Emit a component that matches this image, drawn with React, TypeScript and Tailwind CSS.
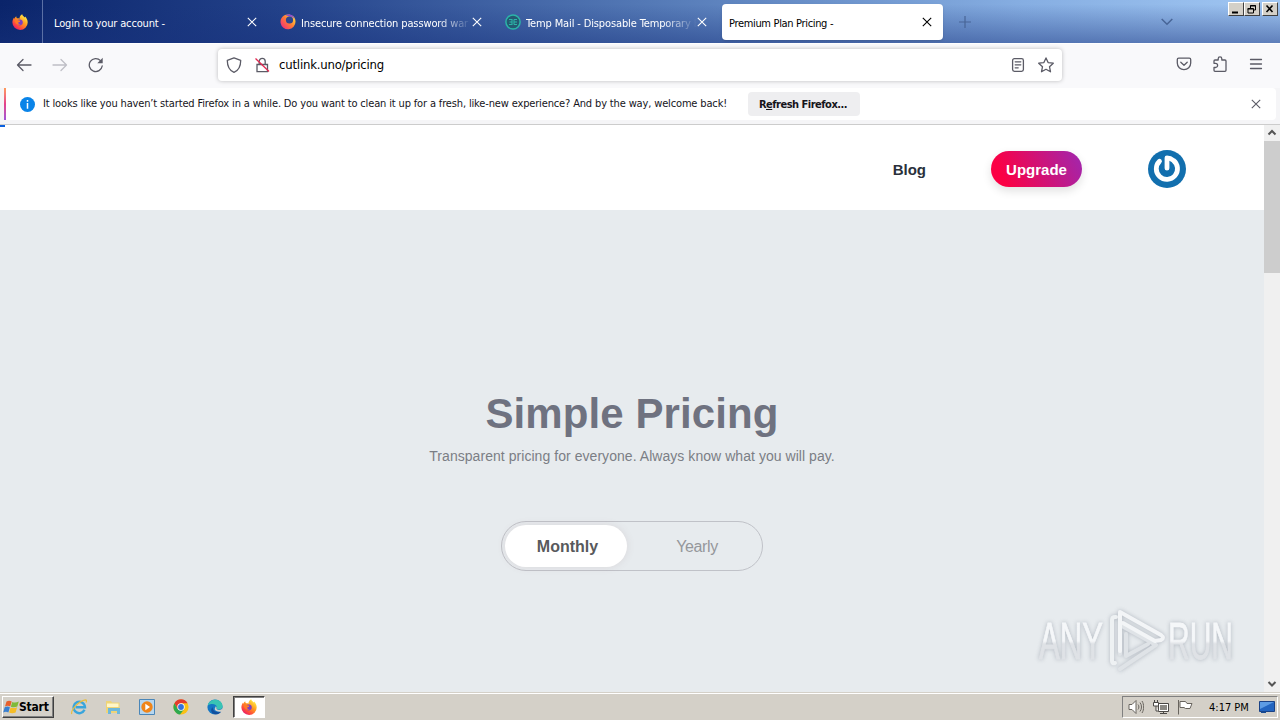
import type { ReactNode } from 'react';

type Tab = {
  title: string;
  icon?: ReactNode;
  active?: boolean;
};

function FirefoxLogo({ className, id }: { className: string; id: string }) {
  return (
    <svg viewBox="0 0 16 16" className={className}>
      <defs>
        <linearGradient id={id} x1="0.85" y1="0.1" x2="0.2" y2="0.95">
          <stop offset="0" stopColor="#fff04a" />
          <stop offset="0.4" stopColor="#ff9a1f" />
          <stop offset="0.75" stopColor="#ff4a3c" />
          <stop offset="1" stopColor="#e4186f" />
        </linearGradient>
      </defs>
      <path
        d="M10.2.3c.3 1.4 1.4 2 2.4 3.1.4-.1.5-.5.5-.8 1.6 1.7 2.6 3.7 2.6 5.9a7.6 7.4 0 0 1-15.3.1c0-2 .7-3.8 1.7-5 0 .5.2.9.4 1.1.3-1 .9-1.8 1.8-2.4-.1.8.2 1.6.7 1.9.8-.1 1.8 0 2.5.5-.2-1.6.9-3.3 2.7-4.4z"
        fill={`url(#${id})`}
      />
      <path d="M5.4 6.5c.8-1.2 3.5-1.5 4.8.1 1.3 1.7.5 4.6-2 4.8-2 .2-3.4-1.4-3-3l1.8-.4c.8-.2 1.1-.6 1.2-1.1z" fill="#7a3fc4" />
      <path d="M2.5 6.2c1-.7 2.3-.6 3.2.1l2.6.4c-.2.9-1.2 1.2-2 1.5-.3 1.4 1 2.2 2.3 1.8-1.6 1.8-5.4.7-6.1-3.8z" fill="#ff7a26" />
    </svg>
  );
}

// Simplified logo used by the support site: a ring with a violet top and a dark centre
function SupportLogo() {
  return (
    <svg viewBox="0 0 16 16" className="h-4 w-4 shrink-0">
      <defs>
        <linearGradient id="supportFox" x1="0.9" y1="0.2" x2="0.1" y2="0.9">
          <stop offset="0" stopColor="#ffd03a" />
          <stop offset="0.45" stopColor="#ff7a35" />
          <stop offset="1" stopColor="#f0307a" />
        </linearGradient>
      </defs>
      <path d="M4 1.5C7.5-.5 15.5.3 15.5 7.6A7.500 7.500 0 0 1 .6 9C.2 5.500 1.300 3.500 4 1.500z" fill="url(#supportFox)" />
      <path d="M5.500 1.300c4-2 8.500.2 9.200 4.200-1.200-2.200-3-3.200-5.200-3z" fill="#8a45e0" />
      <circle cx="9.500" cy="6" r="3.600" fill="#2b468f" />
    </svg>
  );
}

function Cross({ className }: { className: string }) {
  return (
    <svg viewBox="0 0 10 10" className={className} fill="none" stroke="currentColor" strokeWidth="1.1">
      <path d="M.8.8l8.4 8.4M9.2.8L.8 9.2" />
    </svg>
  );
}

const tabs: Tab[] = [
  { title: 'Login to your account -' },
  { title: 'Insecure connection password war', icon: <SupportLogo /> },
  {
    title: 'Temp Mail - Disposable Temporary E',
    icon: (
      <svg viewBox="0 0 16 16" className="h-4 w-4 shrink-0" fill="none" stroke="#2bb5a8" strokeWidth="1.5">
        <circle cx="8" cy="8" r="7.1" fill="#245a72" />
        <path d="M4 5.5h3v5H4M4.5 8H7M9 5.5h3M9 8h3M9 10.5h3M9 5.5v5" strokeWidth="1.1" />
      </svg>
    ),
  },
  { title: 'Premium Plan Pricing -', active: true },
];

function TabStrip() {
  return (
    <header className="flex h-[43px] bg-[linear-gradient(to_bottom,rgba(30,60,140,0)_10%,rgba(24,50,125,0.48)),linear-gradient(to_right,#0a246a,#23428a_22%,#5378b5_50%,#86aee2_80%,#a0c6f2)]">
      <div className="flex w-[43px] items-center justify-center border-r border-[#5b70a5] pr-0.5">
        <FirefoxLogo id="menuFox" className="h-4 w-4" />
      </div>
      <div className="flex gap-1 py-1 pl-1">
        {tabs.map((tab) => (
          <div
            key={tab.title}
            className={`flex h-9 w-[221px] items-center rounded pr-[11px] ${
              tab.active ? 'bg-white pl-[7px] text-black shadow-sm' : tab.icon ? 'pl-2 text-white' : 'pl-[7px] text-white'
            }`}
          >
            {tab.icon}
            <span
              className={`flex-1 pt-1 text-[11px] whitespace-nowrap ${
                tab.icon
                  ? 'ml-[5px] w-0 tracking-[-0.13px] [mask-image:linear-gradient(to_right,black_80%,transparent_100%)]'
                  : tab.active
                    ? 'tracking-[-0.33px]'
                    : 'tracking-[-0.15px]'
              }`}
            >
              {tab.title}
            </span>
            <Cross className="mb-px h-[10px] w-[10px] shrink-0" />
          </div>
        ))}
      </div>
      <svg viewBox="0 0 12 12" className="mt-4 ml-4 h-3 w-3 text-[#486597]" stroke="currentColor" strokeWidth="1.2">
        <path d="M6 0v12M0 6h12" />
      </svg>
      <svg viewBox="0 0 12 8" className="mt-[18px] ml-[190px] h-2 w-3" fill="none" stroke="#486597" strokeWidth="1.5">
        <path d="M.7 1L6 6.3 11.3 1" />
      </svg>
      <div className="mt-0.5 mr-0.5 ml-auto flex h-[14px]">
        <WindowButton>
          <path d="M3 9.5h6" strokeWidth="2" />
        </WindowButton>
        <WindowButton>
          <path d="M5.5 5V2.5h5V7h-2M5 3h6M3 5.5h5.5V10H3zM2.5 6h6" />
        </WindowButton>
        <div className="w-0.5" />
        <WindowButton>
          <path d="M3.500 2.500l6 6.500M9.500 2.500l-6 6.500" strokeWidth="1.6" />
        </WindowButton>
      </div>
    </header>
  );
}

function WindowButton({ children }: { children: ReactNode }) {
  return (
    <div className="h-[14px] w-4 border border-t-white border-r-[#404040] border-b-[#404040] border-l-white bg-[#d4d0c8]">
      <svg viewBox="0 0 14 12" className="h-3 w-[14px]" fill="none" stroke="#000" strokeWidth="1">
        {children}
      </svg>
    </div>
  );
}

function Toolbar() {
  return (
    <div className="flex h-[45px] items-center border-t border-white bg-[#f9f9fb] pb-1 text-[#5b5b66]">
      <svg viewBox="0 0 16 16" className="mt-px ml-4 h-4 w-4" fill="none" stroke="currentColor" strokeWidth="1.3" strokeLinecap="round" strokeLinejoin="round">
        <path d="M15 8H1.500M7 2.500L1.500 8 7 13.500" />
      </svg>
      <svg viewBox="0 0 16 16" className="mt-px ml-5 h-4 w-4 text-[#bfbfc6]" fill="none" stroke="currentColor" strokeWidth="1.3" strokeLinecap="round" strokeLinejoin="round">
        <path d="M1 8h13.500M9 2.500L14.500 8 9 13.500" />
      </svg>
      <svg viewBox="0 0 16 16" className="mt-px ml-5 h-4 w-4" fill="none" stroke="currentColor" strokeWidth="1.3" strokeLinecap="round">
        <path d="M14.200 9A6.500 6.500 0 1 1 12.500 3.600" />
        <path d="M14.700.8v5.400H9.300z" fill="currentColor" stroke="none" />
      </svg>
      <div className="mt-px ml-[114px] flex h-8 w-[844px] items-center rounded bg-white shadow-[0_0_4px_rgba(0,0,0,0.25)]">
        <svg viewBox="0 0 16 16" className="ml-2 h-4 w-4" fill="none" stroke="currentColor" strokeWidth="1.3" strokeLinejoin="round">
          <path d="M8 .9l6.700 2.500c0 5.600-1.600 9.700-6.700 11.900C2.900 13.100 1.300 9 1.300 3.400z" />
        </svg>
        <svg viewBox="0 0 16 16" className="ml-3 h-4 w-4" fill="none" stroke="currentColor" strokeWidth="1.3">
          <path d="M3 7.500h10.500v7.200H3zM5.200 7.500V4.300a3 3 0 0 1 6 0v3.200" />
          <path d="M1.500 1.500l13.500 13" stroke="#e22850" />
        </svg>
        <span className="ml-[9px] pt-px text-[13px] tracking-[-0.2px] text-black">cutlink.uno/pricing</span>
        <svg viewBox="0 0 16 16" className="ml-auto h-4 w-4" fill="none" stroke="currentColor" strokeWidth="1.3" strokeLinecap="round">
          <rect x="2.6" y="1.6" width="10.8" height="12.8" rx="1.8" />
          <path d="M5.200 4.800h5.600M5.200 7.800h5.600M5.200 10.800h3" />
        </svg>
        <svg viewBox="0 0 16 16" className="mr-2 ml-3 h-4 w-4" fill="none" stroke="currentColor" strokeWidth="1.3" strokeLinejoin="round">
          <path d="M8 .9l2.100 4.700 5.200.6-3.800 3.500 1 5.100L8 12.300l-4.500 2.500 1-5.100L.7 6.200l5.200-.6z" />
        </svg>
      </div>
      <svg viewBox="0 0 16 16" className="mr-5 ml-auto h-4 w-4" fill="none" stroke="currentColor" strokeWidth="1.3" strokeLinecap="round" strokeLinejoin="round">
        <path d="M2.700 2.200h10.600c.8 0 1.400.6 1.400 1.400V7A6.700 6.700 0 0 1 1.300 7V3.600c0-.8.600-1.400 1.400-1.400z" />
        <path d="M4.800 6.200L8 9.200l3.200-3" />
      </svg>
      <svg viewBox="0 0 16 16" className="mr-5 h-4 w-4" fill="none" stroke="currentColor" strokeWidth="1.3" strokeLinejoin="round">
        <path d="M2 7.300V5c0-.6.400-1 1-1h3.200V2.700a1.800 1.800 0 0 1 3.600 0V4H13c.6 0 1 .4 1 1v9.300c0 .6-.4 1-1 1H3c-.6 0-1-.4-1-1v-2.800h1.500a2.100 2.100 0 0 0 0-4.200z" />
      </svg>
      <svg viewBox="0 0 16 16" className="mr-4 h-4 w-4" stroke="currentColor" strokeWidth="1.3" strokeLinecap="round">
        <path d="M2.500 3.500h11M2.500 8h11M2.500 12.500h11" />
      </svg>
    </div>
  );
}

function Notice() {
  return (
    <div className="h-[37px] border-b border-[#cccccc] bg-[#f5f5f7] px-1">
      <div className="flex h-8 items-center rounded bg-white">
        <div className="h-8 w-0.5 bg-linear-to-b from-[#ff9a5a] via-[#e5408a] to-[#a052d8]" />
        <svg viewBox="0 0 16 16" className="ml-[14px] h-[15px] w-[15px]">
          <circle cx="8" cy="8" r="8" fill="#0a84e8" />
          <path d="M8 3.300v1.700M8 6.500v6" stroke="#fff" strokeWidth="1.6" />
        </svg>
        <p className="ml-2 w-[705px] text-[11px] tracking-[-0.148px] whitespace-nowrap text-[#15141a]">
          It looks like you haven’t started Firefox in a while. Do you want to clean it up for a fresh, like-new experience? And by the way, welcome back!
        </p>
        <button type="button" className="h-6 w-28 rounded bg-[#eeeef0] pt-0.5 pr-0.5 text-[11px] font-bold tracking-[-0.5px] whitespace-nowrap text-[#15141a]">
          R<span className="underline">e</span>fresh Firefox...
        </button>
        <Cross className="mr-[15px] ml-auto h-[10px] w-[10px] text-[#5b5b66]" />
      </div>
    </div>
  );
}

function Avatar() {
  return (
    <svg viewBox="0 0 38 38" className="h-[38px] w-[38px]" fill="none">
      <circle cx="19" cy="19" r="19" fill="#126fae" />
      <path d="M11.500 11.200A10.600 10.600 0 1 0 25.500 10.500Q22.300 7.800 19 7.800v10.400" stroke="#fff" strokeWidth="4.8" strokeLinecap="round" strokeLinejoin="round" />
    </svg>
  );
}

function Watermark() {
  return (
    <svg
      viewBox="0 0 210 70"
      className="absolute right-[22px] bottom-[17px] h-[70px] w-[210px] drop-shadow-[0_0_2px_rgba(110,120,135,0.45)]"
      fontFamily="'Liberation Sans Narrow', 'Liberation Sans', sans-serif"
      fontSize="52"
    >
      <defs>
        <linearGradient id="glass" x1="0" y1="0" x2="0" y2="1">
          <stop offset="0.5" stopColor="#f5f7f9" />
          <stop offset="0.55" stopColor="#dfe2e6" />
        </linearGradient>
      </defs>
      <g fill="url(#glass)" stroke="url(#glass)" strokeWidth="0.8">
        <text x="7" y="54" textLength="64" lengthAdjust="spacingAndGlyphs">ANY</text>
        <text x="136" y="54" textLength="65" lengthAdjust="spacingAndGlyphs">RUN</text>
      </g>
      <g fill="none" strokeLinejoin="round" strokeLinecap="round">
        <path d="M88 49V20l36 20-36 24M94 29v22l22-12" stroke="#dfe3e7" strokeWidth="4" />
        <path d="M84 12h-1q-3 0-3 3v41q0 3 3 2" stroke="#eef1f3" strokeWidth="4" />
        <path d="M88 46V7l41 23q4 3 0 5l-6 1-32-18" stroke="#f3f5f7" strokeWidth="4" />
      </g>
    </svg>
  );
}

function PricingPage() {
  return (
    <main className="relative flex min-w-0 flex-1 flex-col bg-[#e7ebee] font-['Liberation_Sans',sans-serif]">
      <div className="absolute top-0 left-0 h-0.5 w-[5px] bg-[#0a60df]" />
      <nav className="flex h-[85px] items-center justify-end bg-white pt-[3px] pr-[78px]">
        <a className="pt-0.5 text-[15px] font-bold text-[#2a303b]">Blog</a>
        <a className="mr-[66px] ml-[65px] flex h-9 w-[91px] items-center justify-center rounded-full bg-[linear-gradient(65deg,#fb0044_15%,#9f27b0)] pt-0.5 text-[15px] font-bold text-white shadow-[0_4px_10px_rgba(0,0,0,0.12)]">
          Upgrade
        </a>
        <Avatar />
      </nav>
      <section className="flex flex-col items-center pt-[179px]">
        <h1 className="text-[42px] leading-[50px] font-bold tracking-[0.1px] text-[#6f7280]">Simple Pricing</h1>
        <p className="mt-[7px] text-[14px] leading-5 tracking-[0.05px] text-[#7b7e85]">Transparent pricing for everyone. Always know what you will pay.</p>
        <div className="mt-[55px] flex h-[50px] w-[262px] items-center rounded-full border border-[#c0c2c8] pl-[3px]">
          <div className="flex h-[42px] w-[122px] items-center justify-center rounded-full bg-white pt-0.5 pl-[3px] text-base font-bold text-[#58595c] shadow-[0_0_8px_rgba(120,80,90,0.12)]">
            Monthly
          </div>
          <div className="flex flex-1 items-center justify-center pt-0.5 pl-[5px] text-base tracking-[-0.4px] text-[#95979b]">Yearly</div>
        </div>
      </section>
      <Watermark />
    </main>
  );
}

function Scrollbar() {
  return (
    <div className="flex w-4 flex-col bg-[#f0f0f0] text-[#555]">
      <svg viewBox="0 0 16 16" className="h-4 w-4" fill="none" stroke="currentColor" strokeWidth="2">
        <path d="M4.500 9.500L8 6l3.500 3.500" />
      </svg>
      <div className="h-[132px] bg-[#cdcdcd]" />
      <svg viewBox="0 0 16 16" className="mt-auto h-4 w-4" fill="none" stroke="currentColor" strokeWidth="2">
        <path d="M4.500 6L8 9.500 11.500 6" />
      </svg>
    </div>
  );
}

function Taskbar() {
  return (
    <footer className="flex h-[27px] items-center border-t border-white bg-[#d4d0c8] px-0.5 text-[11px] text-black">
      <button type="button" className="flex h-[22px] w-[52px] items-center border border-t-white border-r-[#404040] border-b-[#404040] border-l-white text-xs font-bold tracking-[-0.2px] shadow-[inset_-1px_-1px_#808080]">
        <svg viewBox="0 0 16 16" className="h-4 w-4 shrink-0">
          <path d="M3.500 2.500c2-1.200 3.500-1 5.200 0L7.200 7.400c-1.600-.9-3.300-.9-5.200 0z" fill="#e8602c" />
          <path d="M9.300 2.900c1.800.9 3.900.9 6.500-.4l-1.500 5c-2.200 1.100-4.500 1-6.500.2z" fill="#7fba3a" />
          <path d="M1.700 8.200c2-.9 3.500-.8 5.200 0l-1.500 5.200c-1.600-.8-3.300-.9-5.200 0z" fill="#3a80d0" />
          <path d="M7.600 8.500c1.800.8 4 .8 6.500-.3L12.600 13.400c-2.200 1.100-4.500 1-6.500.2z" fill="#f5bd28" />
        </svg>
        Start
      </button>
      <div className="ml-[17px] flex items-center gap-[18px]">
        <svg viewBox="0 0 16 16" className="h-4 w-4" fill="none">
          <path d="M13.500 10.800A5.700 5.700 0 1 1 14 8.300H4.500" stroke="#39a5dc" strokeWidth="2.4" />
          <path d="M.8 15C-.5 12 7 2 14.500.8c1.500 0 1.200 1.700.4 2.700" stroke="#e8bd3f" strokeWidth="1.2" />
        </svg>
        <svg viewBox="0 0 16 16" className="h-4 w-4">
          <path d="M1 2h5l1 1.500h7.500V14H1z" fill="#eed477" />
          <path d="M2 4.500h11.500V8H2z" fill="#fff6c8" />
          <path d="M3 9h12v6h-3v-3H6v3H3z" fill="#6db8dc" />
        </svg>
        <svg viewBox="0 0 16 16" className="h-4 w-4">
          <path d="M.5.5h15v15H.5z" fill="#b6d6ef" stroke="#4a86b8" />
          <circle cx="8" cy="8" r="5.7" fill="#f08519" />
          <path d="M6.300 4.800L11 8l-4.700 3.200z" fill="#fff" />
        </svg>
        <svg viewBox="0 0 16 16" className="h-4 w-4">
          <circle cx="8" cy="8" r="7.6" fill="#fbc116" />
          <path d="M1.400 4.200A7.600 7.600 0 0 1 14.600 4.200H8L4.700 9.900z" fill="#e33b2e" />
          <path d="M1.400 4.200a7.600 7.600 0 0 0 5.600 11.300L11.300 9.900l-6.600 0z" fill="#2da94f" />
          <circle cx="8" cy="8" r="3.7" fill="#fff" />
          <circle cx="8" cy="8" r="2.9" fill="#3472dc" />
        </svg>
        <svg viewBox="0 0 16 16" className="h-4 w-4">
          <circle cx="8" cy="8" r="7.6" fill="#1476c4" />
          <path d="M.7 6.500C2.500-1.500 15.600-1.200 15.600 7.500c0 3-4.200 3.700-6 2.300 1.500-4-3.900-6.500-8.900-3.300z" fill="#39c4b4" />
          <path d="M5.800 8.200c-.6 4 4.200 6 8.200 4.500-2 2.800-6 3.500-8.500 1.500-2-2-1.500-4.800.3-6z" fill="#124f9d" />
          <path d="M8.800 7.300c1.200 1 .6 2 .8 2.700 2 1.700 5 .7 6-.7v3c-3.300 1.200-7.500.2-8-2.300z" fill="#d4d0c8" />
        </svg>
      </div>
      <div className="ml-[10px] flex h-[22px] w-8 items-center justify-center border border-t-[#404040] border-r-white border-b-white border-l-[#404040] bg-white shadow-[inset_1px_1px_#808080]">
        <FirefoxLogo id="taskFox" className="h-4 w-4" />
      </div>
      <div className="ml-auto flex h-[22px] w-[156px] items-center border border-t-[#808080] border-r-white border-b-white border-l-[#808080] pl-[5px]">
        <svg viewBox="0 0 16 16" className="h-4 w-4" fill="none" stroke="#68645e">
          <path d="M1 5.500h3L8 1.500v13l-4-4H1z" fill="#fff" />
          <path d="M10 5.500c1.200 1.500 1.200 3.500 0 5M12 3.500c2 2.600 2 6.400 0 9M14 2c2.200 3.500 2.200 8.500 0 12" />
        </svg>
        <svg viewBox="0 0 16 16" className="ml-[9px] h-4 w-4" fill="#fff" stroke="#4a4845">
          <path d="M5.500 4.500h10v8h-10zM7 14.500h7M10.500 12.500v2" />
          <path d="M7 6h7v5H7z" fill="#8a8883" stroke="none" />
          <path d="M.5 3.500h5v3.500h-5zM1.500 1v2.500M4.500 1v2.500M3 7v5h2.500" />
        </svg>
        <svg viewBox="0 0 16 16" className="ml-2 h-4 w-4" fill="#fff" stroke="#68645e">
          <path d="M1.500 1v14.500M3 2.500h5.500l1.500 2h5l-2 5H8.500L7 8.500H3z" />
        </svg>
        <span className="ml-4 w-[42px] pt-0.5 whitespace-nowrap">4:17 PM</span>
        <svg viewBox="0 0 16 16" className="ml-2 h-4 w-4">
          <path d="M.5 2.500h15v10H.5z" fill="#2365c0" stroke="#1a4286" />
          <path d="M1 3h14L1 10z" fill="#5d9ce4" />
          <path d="M2 12.500h5v1.500H2z" fill="#174b93" />
        </svg>
      </div>
    </footer>
  );
}

export default function App() {
  return (
    <div className="flex h-[720px] w-[1280px] flex-col overflow-hidden bg-white font-['DejaVu_Sans_Condensed','DejaVu_Sans',sans-serif]">
      <TabStrip />
      <Toolbar />
      <Notice />
      <div className="flex min-h-0 flex-1 border-b border-[#d4d0c8]">
        <PricingPage />
        <Scrollbar />
      </div>
      <Taskbar />
    </div>
  );
}
